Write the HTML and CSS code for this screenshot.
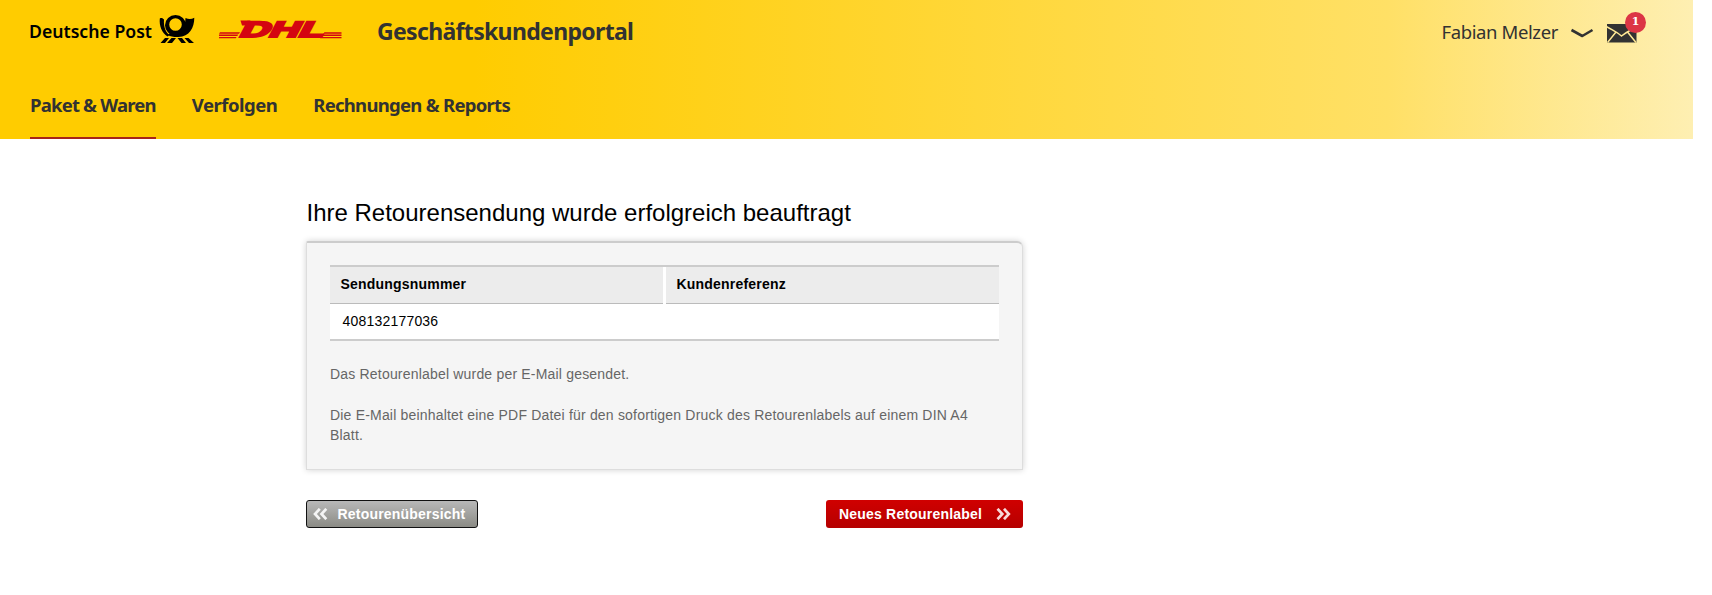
FILE: index.html
```html
<!DOCTYPE html>
<html lang="de">
<head>
<meta charset="utf-8">
<title>Geschäftskundenportal</title>
<link rel="stylesheet" href="styles.css">
</head>
<body>
<header class="header">
  <div class="topbar">
    <svg class="logo-post" width="166" height="32" viewBox="0 0 166 32" role="img" aria-label="Deutsche Post">
      <text class="post-name" x="-1" y="24" textLength="123" lengthAdjust="spacingAndGlyphs">Deutsche Post</text>
      <g fill="#000">
        <path d="M129.800 4.500c2-1 3 0 4.200 1-.7 8.500 2.500 13.500 5.500 15.500l-2 1.500C132 19 129 12 129.800 4.500z"/>
        <path d="M155.500 4c3 1.500 6 1.500 8.800-.3 0 10-5 19-15.800 19.200-4.500.1-8-.2-10.500-2l2-2.200c8 3.500 15.500-4 15.500-14.700z"/>
        <path fill-rule="evenodd" d="M145.500 1a10.500 10.300 0 1 1 0 20.600a10.500 10.300 0 0 1 0-20.600zm0 3.200a6.300 6.300 0 1 0 0 12.600a6.300 6.300 0 0 0 0-12.600z"/>
        <path d="M135 24h4l-4 5h-4.500zM141.500 24h4.500l-4 5h-5zM147.500 24h4.500l4 5h-4.500zM154.500 24h4l5.500 5h-5z"/>
      </g>
    </svg>
    <svg class="logo-dhl" width="124" height="32" viewBox="0 0 124 32" role="img" aria-label="DHL">
      <g fill="#d40511">
        <path d="M1 18.300h20l-1 1.400H0zM0 20.600h19.300l-1 1.400H0zM0 22.900h17.600l-.8 1.300H0zM105.500 18.300H122.500v1.400h-18.500zM103.700 20.600H122.500V22h-19.800zM102 22.900h20.500v1.300h-21.500z"/>
        <path d="M21.500 6.500h10l-4 5h-4.500z"/>
      </g>
      <text class="dhl-name" transform="translate(19 23.200) skewX(-28)" x="0" y="0" textLength="84" lengthAdjust="spacingAndGlyphs">DHL</text>
    </svg>
    <span class="portal">Geschäftskundenportal</span>
    <div class="user">
      <span class="user-name">Fabian Melzer</span>
      <svg class="chevron" width="24" height="12" viewBox="0 0 24 12"><path d="M1.500 2L12.300 8L22.500 2" fill="none" stroke="#323232" stroke-width="2.600" stroke-linejoin="round"/></svg>
      <span class="mail">
        <svg width="30" height="19" viewBox="0 0 30 19"><path fill="#323232" d="M0 0h29.500v18.500H0z"/><path d="M-.5 2.500C5 6 9.500 7.500 14.500 12C20 7.500 24 6 30 2.500M.5 18.500L9 8M29 18.500L20.500 8" fill="none" stroke="#ffe995" stroke-width="1.500"/></svg>
        <span class="badge">1</span>
      </span>
    </div>
  </div>
  <nav class="nav">
    <a class="nav-item nav-active">Paket &amp; Waren</a>
    <a class="nav-item nav-track">Verfolgen</a>
    <a class="nav-item nav-reports">Rechnungen &amp; Reports</a>
  </nav>
</header>
<main class="content">
  <h1 class="title">Ihre Retourensendung wurde erfolgreich beauftragt</h1>
  <section class="panel">
    <div class="table">
      <div class="row head"><div class="cell">Sendungsnummer</div><div class="cell">Kundenreferenz</div></div>
      <div class="row data"><div class="cell">408132177036</div><div class="cell"></div></div>
    </div>
    <p class="note">Das Retourenlabel wurde per E-Mail gesendet.</p>
    <p class="note">Die E-Mail beinhaltet eine PDF Datei für den sofortigen Druck des Retourenlabels auf einem DIN A4 Blatt.</p>
  </section>
  <div class="actions">
    <a class="btn btn-back"><svg width="15" height="12" viewBox="0 0 15 12"><path d="M6.800 .8L2 6l4.800 5.200M13.300 .8L8.500 6l4.800 5.200" fill="none" stroke="#f4f4f4" stroke-width="2.700"/></svg><span>Retourenübersicht</span></a>
    <a class="btn btn-new"><span>Neues Retourenlabel</span><svg width="15" height="12" viewBox="0 0 15 12"><path d="M1.500 .8L6.300 6l-4.800 5.200M8 .8L12.800 6 8 11.200" fill="none" stroke="#f8dada" stroke-width="2.700"/></svg></a>
  </div>
</main>
</body>
</html>
```
FILE: styles.css
```css
* { box-sizing: border-box; }
body { margin: 0; background: #fff; font-family: "Liberation Sans", Arial, sans-serif; color: #000; }

.header {
  width: 1693px; height: 139px; padding: 0 0 0 30px;
  display: flex; flex-direction: column; justify-content: space-between;
  background: linear-gradient(90deg, #fc0 0%, #fc0 28%, #ffe066 82%, #feefb2 100%);
  font-family: "Noto Sans", sans-serif; color: #323232;
}
.topbar { display: flex; align-items: center; height: 60px; padding-top: 4px; }
.logo-post { margin-top: -4px; overflow: visible; }
.post-name { font: 600 18.5px "Noto Sans", sans-serif; fill: #000; }
.logo-dhl { margin: -4px 0 0 23px; overflow: visible; }
.dhl-name { font: bold 22px "Liberation Sans", sans-serif; fill: #d40511; stroke: #d40511; stroke-width: 2.2px; }
.portal { margin: -2px 0 0 34px; font-size: 23px; font-weight: 700; letter-spacing: -.66px; }
.user { display: flex; align-items: center; margin-left: auto; padding-right: 56px; font-size: 18.5px; letter-spacing: -.38px; }
.user-name { margin-top: -2px; }
.chevron { margin: 4px 0 0 12px; }
.mail { position: relative; display: flex; margin: 2px 0 0 13px; }
.badge {
  position: absolute; left: 18px; top: -12px; width: 21px; height: 21px; border-radius: 50%;
  background: #dc3545; color: #fff; text-align: center; font: bold 11px/19px "DejaVu Serif", serif; letter-spacing: 0;
}
.nav { display: flex; gap: 36px; height: 62px; }
.nav-item { font-size: 18.5px; font-weight: 700; line-height: 25px; padding-top: 15px; letter-spacing: -.72px; }
.nav-track { letter-spacing: -.5px; }
.nav-active { border-bottom: 2px solid #a82318; letter-spacing: -.8px; }

.content { width: 717px; margin: 60px 0 0 306px; }
.title { margin: 0; padding-left: .5px; font-size: 24px; font-weight: 400; line-height: 28px; white-space: nowrap; }
.panel {
  margin-top: 14px; height: 229px; padding: 22px 23px 0;
  background: #f5f5f5; border: 1px solid #ddd; border-top: 2px solid #ccc;
  border-radius: 2px 6px 0 0; box-shadow: 0 0 6px rgba(0, 0, 0, .18);
}
.table { border-top: 2px solid #ccc; border-bottom: 2px solid #ccc; background: #fff; margin-bottom: 23px; }
.row { display: grid; grid-template-columns: 1fr 1fr; column-gap: 3px; font-size: 14px; letter-spacing: .2px; }
.head .cell { height: 37px; line-height: 35px; padding-left: 10.5px; background: #ececec; border-bottom: 1px solid #bbb; font-weight: 700; }
.data .cell { height: 35px; line-height: 35px; padding-left: 12.5px; }
.note { margin: 0 0 21px; font-size: 14px; line-height: 20px; color: #666; letter-spacing: .19px; }
.actions { display: flex; justify-content: space-between; margin-top: 30px; }
.btn { display: flex; align-items: center; height: 28px; border-radius: 3px; color: #fff; font-size: 14px; font-weight: 700; letter-spacing: .2px; }
.btn-back { width: 172px; padding-left: 6px; gap: 9.5px; border: 1px solid #111; background: linear-gradient(#b8b8b8, #8b8b85); }
.btn-new { width: 197px; padding-left: 13px; gap: 14px; background: linear-gradient(#d00000, #b50000); }
```
